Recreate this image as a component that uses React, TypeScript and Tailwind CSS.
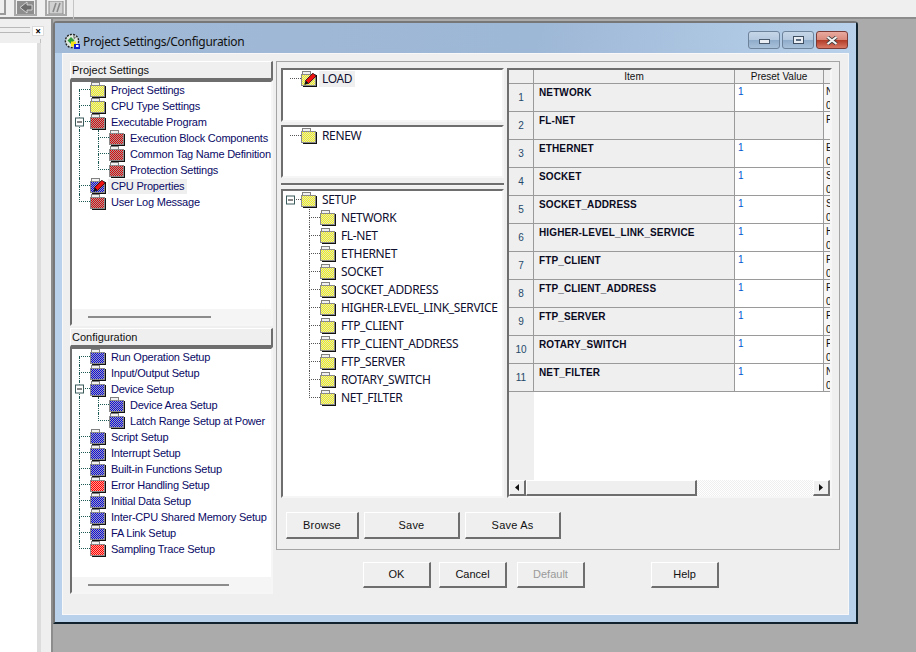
import type { ReactNode } from 'react'

type Hue = 'yellow' | 'red' | 'brightRed' | 'blue'

type TreeItem = {
  label: string
  hue: Hue
  level: 0 | 1
  expander?: boolean
  pencil?: boolean
  selected?: boolean
  first?: boolean
  last?: boolean
  rootLine?: boolean
}

const PROJECT_TREE: TreeItem[] = [
  { label: 'Project Settings', hue: 'yellow', level: 0, first: true, rootLine: true },
  { label: 'CPU Type Settings', hue: 'yellow', level: 0, rootLine: true },
  { label: 'Executable Program', hue: 'red', level: 0, expander: true, rootLine: true },
  { label: 'Execution Block Components', hue: 'red', level: 1, first: true, rootLine: true },
  { label: 'Common Tag Name Definitions', hue: 'red', level: 1, rootLine: true },
  { label: 'Protection Settings', hue: 'red', level: 1, last: true, rootLine: true },
  { label: 'CPU Properties', hue: 'blue', level: 0, pencil: true, selected: true, rootLine: true },
  { label: 'User Log Message', hue: 'red', level: 0, last: true, rootLine: true },
]

const CONFIG_TREE: TreeItem[] = [
  { label: 'Run Operation Setup', hue: 'blue', level: 0, first: true, rootLine: true },
  { label: 'Input/Output Setup', hue: 'blue', level: 0, rootLine: true },
  { label: 'Device Setup', hue: 'blue', level: 0, expander: true, rootLine: true },
  { label: 'Device Area Setup', hue: 'blue', level: 1, first: true, rootLine: true },
  { label: 'Latch Range Setup at Power', hue: 'blue', level: 1, last: true, rootLine: true },
  { label: 'Script Setup', hue: 'blue', level: 0, rootLine: true },
  { label: 'Interrupt Setup', hue: 'blue', level: 0, rootLine: true },
  { label: 'Built-in Functions Setup', hue: 'blue', level: 0, rootLine: true },
  { label: 'Error Handling Setup', hue: 'brightRed', level: 0, rootLine: true },
  { label: 'Initial Data Setup', hue: 'blue', level: 0, rootLine: true },
  { label: 'Inter-CPU Shared Memory Setup', hue: 'blue', level: 0, rootLine: true },
  { label: 'FA Link Setup', hue: 'blue', level: 0, rootLine: true },
  { label: 'Sampling Trace Setup', hue: 'brightRed', level: 0, last: true, rootLine: true },
]

const SETUP_CHILDREN = [
  'NETWORK',
  'FL-NET',
  'ETHERNET',
  'SOCKET',
  'SOCKET_ADDRESS',
  'HIGHER-LEVEL_LINK_SERVICE',
  'FTP_CLIENT',
  'FTP_CLIENT_ADDRESS',
  'FTP_SERVER',
  'ROTARY_SWITCH',
  'NET_FILTER',
]

const SETUP_TREE: TreeItem[] = [
  { label: 'SETUP', hue: 'yellow', level: 0, expander: true, first: true, last: true },
  ...SETUP_CHILDREN.map((label, i): TreeItem => ({
    label,
    hue: 'yellow',
    level: 1,
    first: i === 0,
    last: i === SETUP_CHILDREN.length - 1,
  })),
]

const TABLE_ROWS = [
  { item: 'NETWORK', value: '1', note: 'N', zero: true },
  { item: 'FL-NET', value: '', note: 'F', zero: false },
  { item: 'ETHERNET', value: '1', note: 'E', zero: true },
  { item: 'SOCKET', value: '1', note: 'S', zero: true },
  { item: 'SOCKET_ADDRESS', value: '1', note: 'S', zero: true },
  { item: 'HIGHER-LEVEL_LINK_SERVICE', value: '1', note: 'H', zero: true },
  { item: 'FTP_CLIENT', value: '1', note: 'F', zero: true },
  { item: 'FTP_CLIENT_ADDRESS', value: '1', note: 'F', zero: true },
  { item: 'FTP_SERVER', value: '1', note: 'F', zero: true },
  { item: 'ROTARY_SWITCH', value: '1', note: 'F', zero: true },
  { item: 'NET_FILTER', value: '1', note: 'N', zero: true },
]

const HUES: Record<Hue, [string, string]> = {
  yellow: ['#ffff00', '#d6d6d6'],
  red: ['#e80000', '#a0a0a0'],
  brightRed: ['#ff0000', '#ffa098'],
  blue: ['#0000ee', '#a8a8a8'],
}

// checker of single pixels across the folder body
const DITHER = (() => {
  let d = ''
  for (let y = 4; y < 14; y++) {
    for (let x = 1; x < 14; x++) {
      if ((x + y) % 2 === 0) d += `M${x} ${y}h1v1h-1z`
    }
  }
  return d
})()

function Folder({ hue, pencil }: { hue: Hue; pencil?: boolean }) {
  const [a, b] = HUES[hue]
  return (
    <svg width="16" height="16" viewBox="0 0 16 16" className="shrink-0">
      <path d="M1 0h9v3H1z" fill="#f0f0f0" />
      <path d="M1 0h9v1H1zM1 1h1v2H1zM9 1h1v2H9z" fill="#808080" />
      <rect x="0" y="3" width="15" height="12" fill="#8a8a8a" />
      <rect x="1" y="4" width="13" height="10" fill={a} />
      <path d={DITHER} fill={b} />
      <path d="M15 4h1v12H2v-1h13z" fill="#111" />
      {pencil && (
        <g>
          <path d="M4.5 9.5 12 2.2l3 3-7.5 7.4z" fill="#f01010" stroke="#200" strokeWidth="0.8" />
          <path d="M4.5 9.5l3 3-4.2 1.4z" fill="#111" />
        </g>
      )}
    </svg>
  )
}

function Expander() {
  return (
    <span className="absolute left-[-4px] top-1/2 flex h-[9px] w-[9px] -translate-y-1/2 items-center justify-center border border-[#3a5a5a] bg-white">
      <span className="h-px w-[5px] bg-[#111]" />
    </span>
  )
}

function TreeRow({ node, rowClass, textClass, color }: { node: TreeItem; rowClass: string; textClass: string; color: string }) {
  const child = node.level === 1
  const upper = (child || node.rootLine) && (child || !node.first)
  const lower = (child || node.rootLine) && !node.last
  return (
    <div className={`flex items-center whitespace-nowrap ${rowClass}`}>
      {child && (
        <span className={`mr-[8px] h-full w-[11px] shrink-0 border-dotted ${color} ${node.rootLine ? 'border-l' : ''}`} />
      )}
      <span className="relative flex h-full w-[11px] shrink-0 flex-col">
        <span className={`h-1/2 border-b border-dotted ${color} ${upper ? 'border-l' : ''}`} />
        <span className={`h-1/2 border-dotted ${color} ${lower ? 'border-l' : ''}`} />
        {node.expander && <Expander />}
      </span>
      <Folder hue={node.hue} pencil={node.pencil} />
      <span className={`ml-[2px] px-[3px] ${textClass} ${node.selected ? 'bg-[#efefef]' : ''}`}>{node.label}</span>
    </div>
  )
}

function SunkenBox({ className, children }: { className: string; children?: ReactNode }) {
  return (
    <div className={`border-2 border-t-[#6e6e6e] border-l-[#6e6e6e] border-r-[#f6f6f6] border-b-[#f6f6f6] bg-white ${className}`}>
      {children}
    </div>
  )
}

function SidePane({ title, nodes, listClass, lineWidth }: { title: string; nodes: TreeItem[]; listClass: string; lineWidth: string }) {
  return (
    <div className="w-[203px]">
      <div className="flex h-[19px] items-center border border-r-2 border-b-2 border-t-white border-l-white border-r-[#6e6e6e] border-b-[#6e6e6e] bg-[#efefef] pl-px pt-px text-[11px] text-[#111]">
        {title}
      </div>
      <SunkenBox className={`flex flex-col overflow-hidden ${listClass}`}>
        <div className="min-h-0 flex-1 pl-[7px]">
          {nodes.map(n => (
            <TreeRow
              key={n.label}
              node={n}
              rowClass="h-[16px]"
              textClass="text-[11px] leading-[15px] tracking-[-0.22px] text-[#0a0a66]"
              color="border-[#1d5a55]"
            />
          ))}
        </div>
        <div className="flex h-[15px] items-center bg-[#f5f5f5] pl-[16px]">
          <div className={`h-[2px] bg-[#8c8c8c] ${lineWidth}`} />
        </div>
      </SunkenBox>
    </div>
  )
}

function MiddleTree({ nodes }: { nodes: TreeItem[] }) {
  return (
    <div className="pl-[7px]">
      {nodes.map(n => (
        <TreeRow
          key={n.label}
          node={n}
          rowClass="h-[18px]"
          textClass="font-['Noto_Sans',sans-serif] text-[12px] leading-[16px] tracking-[-0.36px] text-[#101030]"
          color="border-[#555]"
        />
      ))}
    </div>
  )
}

function DialogButton({ label, className, disabled }: { label: string; className: string; disabled?: boolean }) {
  return (
    <div
      className={`flex items-center justify-center border border-r-2 border-b-2 border-t-white border-l-white border-r-[#6e6e6e] border-b-[#6e6e6e] bg-[#efefef] text-[11px] ${disabled ? 'text-[#9a9a9a]' : 'text-[#111]'} ${className}`}
    >
      {label}
    </div>
  )
}

function ScrollArrow({ dir }: { dir: 'left' | 'right' }) {
  return (
    <div className="flex h-[16px] w-[17px] shrink-0 items-center justify-center border border-r-2 border-b-2 border-t-white border-l-white border-r-[#6e6e6e] border-b-[#6e6e6e] bg-[#efefef]">
      <svg width="4" height="7" viewBox="0 0 4 7">
        <path d={dir === 'left' ? 'M4 0v7L0 3.5z' : 'M0 0v7l4-3.5z'} fill="#111" />
      </svg>
    </div>
  )
}

function SettingsTable() {
  return (
    <SunkenBox className="flex h-[430px] w-[325px] flex-col overflow-hidden">
      <div className="flex h-[14px] shrink-0 border-b border-[#9a9a9a] bg-[#efefef] text-[10px] leading-[13px] text-[#111]">
        <div className="w-[25px] border-r border-[#9a9a9a]" />
        <div className="w-[201px] border-r border-[#9a9a9a] text-center">Item</div>
        <div className="w-[89px] border-r border-[#9a9a9a] text-center">Preset Value</div>
        <div className="flex-1" />
      </div>
      {TABLE_ROWS.map((row, i) => (
        <div key={row.item} className="flex h-[28px] shrink-0 border-b border-[#9a9a9a] text-[10px] leading-[14px]">
          <div className="flex w-[25px] items-center justify-center border-r border-[#9a9a9a] bg-[#efefef] text-[#24486a]">{i + 1}</div>
          <div className="w-[201px] border-r border-[#9a9a9a] bg-[#efefef] pl-[5px] pt-[2px] font-bold tracking-[0.12px] text-[#0a0a1e]">{row.item}</div>
          <div className={`w-[89px] border-r border-[#9a9a9a] pl-[3px] pt-px text-[#0058d0] ${row.value ? 'bg-white' : 'bg-[#efefef]'}`}>{row.value}</div>
          <div className="flex-1 overflow-hidden bg-[#f7f7f7] pl-[2px] pt-px text-[#111]">
            <div>{row.note}</div>
            {row.zero && <div>0</div>}
          </div>
        </div>
      ))}
      <div className="flex min-h-0 flex-1">
        <div className="w-[25px] bg-[#efefef]" />
        <div className="flex-1 bg-white" />
      </div>
      <div className="flex h-[16px] shrink-0">
        <ScrollArrow dir="left" />
        <div className="w-[171px] border border-r-2 border-b-2 border-t-white border-l-white border-r-[#6e6e6e] border-b-[#6e6e6e] bg-[#efefef]" />
        <div className="flex-1 bg-[repeating-conic-gradient(#efefef_0_25%,#ffffff_0_50%)] bg-[length:2px_2px]" />
        <ScrollArrow dir="right" />
      </div>
    </SunkenBox>
  )
}

function TitleIcon() {
  return (
    <svg width="17" height="17" viewBox="0 0 17 17" className="shrink-0">
      <circle cx="8" cy="8" r="6.6" fill="#dfe7df" stroke="#222" strokeWidth="1.4" strokeDasharray="2 1.2" />
      <path d="M3.5 7.5 7 4l3.5 3.5L7 11z" fill="#2f9a3a" />
      <path d="M9 2.5l3 2-2 2z" fill="#7a7a7a" />
      <rect x="7" y="8.5" width="5" height="5" fill="#f6e21a" />
      <rect x="10" y="11" width="6" height="5" fill="#1020d0" />
      <rect x="12" y="12" width="2.5" height="2" fill="#ffffff" />
    </svg>
  )
}

function WindowButtons() {
  const base = 'flex h-[18px] w-[32px] items-center justify-center rounded-[3px] border'
  return (
    <div className="flex gap-[2px]">
      <div className={`${base} border-[#6d829b] bg-[linear-gradient(#c6d6e8_0%,#b4c8de_50%,#8facca_52%,#a9c1da_100%)]`}>
        <span className="mt-[3px] h-[5px] w-[11px] border border-[#4a5a6e] bg-[#e8eef4]" />
      </div>
      <div className={`${base} border-[#6d829b] bg-[linear-gradient(#c6d6e8_0%,#b4c8de_50%,#8facca_52%,#a9c1da_100%)]`}>
        <span className="flex h-[8px] w-[11px] items-center justify-center border border-[#3f4e60] bg-[#e8eef4]">
          <span className="h-[2px] w-[5px] bg-[#5c6c80]" />
        </span>
      </div>
      <div className={`${base} border-[#7a3a36] bg-[linear-gradient(#e9aaa0_0%,#d98a7c_48%,#b23c28_52%,#d87864_100%)]`}>
        <svg width="12" height="9" viewBox="0 0 12 9">
          <path d="M1.5 1 10.5 8M10.5 1 1.5 8" stroke="#3c3c3c" strokeWidth="3.6" />
          <path d="M1.5 1 10.5 8M10.5 1 1.5 8" stroke="#f4f4f4" strokeWidth="2.2" />
        </svg>
      </div>
    </div>
  )
}

function Dialog() {
  return (
    <div className="absolute left-[53px] top-[21px] flex h-[603px] w-[805px] flex-col rounded-t-[4px] border-2 border-t-[#777] border-l-[#777] border-r-[#10222e] border-b-[#10222e] bg-[#b9d1ea] font-['Liberation_Sans',Arial,sans-serif]">
      <div className="flex h-[30px] shrink-0 items-start bg-[linear-gradient(100deg,#a0b9d6_0%,#9db7d6_60%,#b9d1ea_100%)] pl-[9px] pr-[8px] pt-[8px]">
        <div className="mt-[2px] flex items-center">
          <TitleIcon />
          <span className="ml-[2px] font-['Noto_Sans',sans-serif] text-[12px] leading-[16px] tracking-[-0.3px] text-[#111]">Project Settings/Configuration</span>
        </div>
        <div className="ml-auto">
          <WindowButtons />
        </div>
      </div>
      <div className="mx-[7px] h-[562px] border border-[#f8f8f8] bg-[#efefef] pl-[7px] pt-[7px]">
        <div className="flex gap-[3px]">
          <div className="flex flex-col gap-[2px]">
            <SidePane title="Project Settings" nodes={PROJECT_TREE} listClass="h-[246px]" lineWidth="w-[123px]" />
            <SidePane title="Configuration" nodes={CONFIG_TREE} listClass="h-[247px]" lineWidth="w-[141px]" />
          </div>
          <div>
            <div className="h-[489px] w-[564px] border border-[#a4a4a4] pl-[4px] pt-[6px]">
              <div className="flex gap-[3px]">
                <div className="w-[223px]">
                  <SunkenBox className="h-[54px]">
                    <MiddleTree nodes={[{ label: 'LOAD', hue: 'yellow', level: 0, first: true, last: true, pencil: true, selected: true }]} />
                  </SunkenBox>
                  <SunkenBox className="mt-[3px] h-[53px]">
                    <MiddleTree nodes={[{ label: 'RENEW', hue: 'yellow', level: 0, first: true, last: true }]} />
                  </SunkenBox>
                  <div className="mt-[5px] h-[3px] border-t-2 border-b border-t-[#6e6e6e] border-b-[#f6f6f6]" />
                  <SunkenBox className="mt-[3px] h-[309px]">
                    <MiddleTree nodes={SETUP_TREE} />
                  </SunkenBox>
                </div>
                <SettingsTable />
              </div>
              <div className="mt-[14px] flex gap-[5px] pl-[5px]">
                <DialogButton label="Browse" className="h-[27px] w-[73px] tracking-[0.2px]" />
                <DialogButton label="Save" className="h-[27px] w-[96px] tracking-[0.2px]" />
                <DialogButton label="Save As" className="h-[27px] w-[96px] tracking-[0.2px]" />
              </div>
            </div>
            <div className="mt-[12px] flex pl-[87px]">
              <DialogButton label="OK" className="h-[26px] w-[68px]" />
              <DialogButton label="Cancel" className="ml-[8px] h-[26px] w-[68px]" />
              <DialogButton label="Default" disabled className="ml-[10px] h-[26px] w-[68px]" />
              <DialogButton label="Help" className="ml-[66px] h-[26px] w-[68px]" />
            </div>
          </div>
        </div>
      </div>
    </div>
  )
}

function ToolbarFragments() {
  return (
    <div className="flex h-[19px] items-start border-b-2 border-[#8c8c8c] bg-[#efefef]">
      <div className="h-[15px] w-[6px] border-r-2 border-b-2 border-[#9a9a9a]" />
      <div className="ml-[8px] flex h-[16px] w-[23px] items-center justify-center border-2 border-t-0 border-[#a8a8a8]">
        <svg width="17" height="13" viewBox="0 0 17 13">
          <rect width="17" height="13" fill="#8e8e8e" />
          <path d="M10 1 3 6.5l7 5.5V9h5V4h-5z" fill="#6c6c6c" stroke="#e4e4e4" strokeWidth="0.8" />
        </svg>
      </div>
      <div className="ml-[8px] flex h-[16px] w-[22px] items-center justify-center border-2 border-t-0 border-[#a8a8a8]">
        <svg width="16" height="13" viewBox="0 0 16 13">
          <rect x="1" width="14" height="13" fill="#d0d0d0" stroke="#8a8a8a" />
          <path d="M5 11 8 2M9 11l3-9" stroke="#8a8a8a" strokeWidth="1.6" />
        </svg>
      </div>
      <div className="ml-[6px] h-[19px] w-px bg-[#c4c4c4]" />
    </div>
  )
}

function LeftDock() {
  return (
    <div className="flex w-[53px] shrink-0 flex-col border-r-2 border-[#8c8c8c] bg-[#efefef]">
      <div className="flex h-[20px] items-start pt-[7px]">
        <div className="mt-px h-[6px] w-[30px] border-y border-[#b8b8b8]" />
        <div className="ml-[2px] flex h-[10px] w-[12px] items-center justify-center border border-[#dcdcdc] bg-white text-[10px] font-bold leading-none text-black">×</div>
      </div>
      <div className="h-[4px] w-[41px] border-r border-[#c0c0c0]" />
      <div className="w-[41px] flex-1 border-r-4 border-[#dcdcdc] bg-white" />
    </div>
  )
}

export default function App() {
  return (
    <div className="relative flex h-[652px] w-[916px] flex-col overflow-hidden bg-[#ababab]">
      <ToolbarFragments />
      <div className="flex min-h-0 flex-1">
        <LeftDock />
      </div>
      <Dialog />
    </div>
  )
}
